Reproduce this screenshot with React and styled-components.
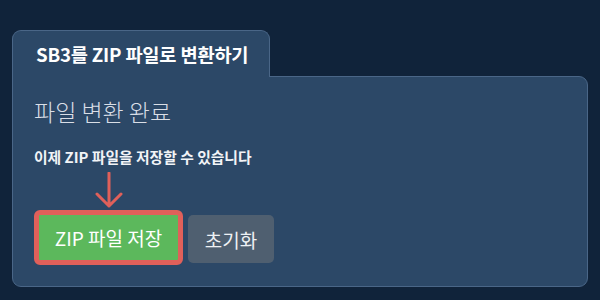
import * as React from "react";
import styled, { createGlobalStyle } from "styled-components";

const GlobalStyle = createGlobalStyle`
  html, body {
    margin: 0;
    padding: 0;
    background: #10233a;
  }
  body {
    font-family: "Noto Sans CJK KR", "Noto Sans", sans-serif;
  }
`;

export default function App() {
  return (
    <>
      <GlobalStyle />
      <Page>
        <Card>
          <Tab>SB3를 ZIP 파일로 변환하기</Tab>
          <Panel>
            <Heading>파일 변환 완료</Heading>
            <Message>이제 ZIP 파일을 저장할 수 있습니다</Message>
            <Buttons>
              <SaveWrap>
                <Pointer width="28" height="37" viewBox="0 0 28 37">
                  <path
                    d="M14 1 L14 34 M2 22 L14 34 L26 22"
                    fill="none"
                    stroke="#e0605a"
                    strokeWidth="3"
                    strokeLinecap="round"
                    strokeLinejoin="round"
                  />
                </Pointer>
                <SaveButton>ZIP 파일 저장</SaveButton>
              </SaveWrap>
              <ResetButton>초기화</ResetButton>
            </Buttons>
          </Panel>
        </Card>
      </Page>
    </>
  );
}

const Page = styled.div`
  padding: 30px 12px 0;
`;

const Card = styled.div`
  width: 576px;
  display: flex;
  flex-direction: column;
  align-items: flex-start;
`;

const Tab = styled.div`
  position: relative;
  z-index: 1;
  box-sizing: border-box;
  width: 258px;
  height: 47px;
  margin-bottom: -1px;
  padding: 0 0 1px 23px;
  display: flex;
  align-items: center;
  background: #2c4867;
  border: 1px solid #4a6687;
  border-bottom: none;
  border-radius: 9px 9px 0 0;
  color: #ffffff;
  font-size: 18.7px;
  font-weight: 700;
  letter-spacing: -0.2px;
`;

const Panel = styled.div`
  box-sizing: border-box;
  width: 576px;
  height: 211px;
  padding: 18px 21px 0;
  background: #2c4867;
  border: 1px solid #4a6687;
  border-radius: 0 9px 9px 9px;
`;

const Heading = styled.div`
  color: #d9dee6;
  font-size: 23px;
  font-weight: 300;
  line-height: 32px;
`;

const Message = styled.div`
  margin-top: 20px;
  color: #f2f4f7;
  font-size: 14.8px;
  font-weight: 700;
  line-height: 20px;
`;

const Buttons = styled.div`
  margin-top: 43px;
  display: flex;
  align-items: flex-start;
  gap: 5px;
`;

const SaveWrap = styled.div`
  position: relative;
`;

const Pointer = styled.svg`
  position: absolute;
  left: 50%;
  bottom: 100%;
  margin-left: -14px;
  margin-bottom: 1px;
  display: block;
`;

const BaseButton = styled.button`
  box-sizing: border-box;
  margin: 0;
  padding: 0;
  display: flex;
  align-items: center;
  justify-content: center;
  font-family: "Noto Sans CJK KR", "Noto Sans", sans-serif;
  font-size: 19px;
  font-weight: 400;
  color: #ffffff;
  cursor: pointer;
`;

const SaveButton = styled(BaseButton)`
  width: 149px;
  height: 55px;
  background: #5cb85c;
  border: 5px solid #e0605a;
  border-radius: 6px;
`;

const ResetButton = styled(BaseButton)`
  width: 86px;
  height: 48px;
  margin-top: 5px;
  background: #4f5f70;
  border: none;
  border-radius: 5px;
  color: #eef1f4;
`;
